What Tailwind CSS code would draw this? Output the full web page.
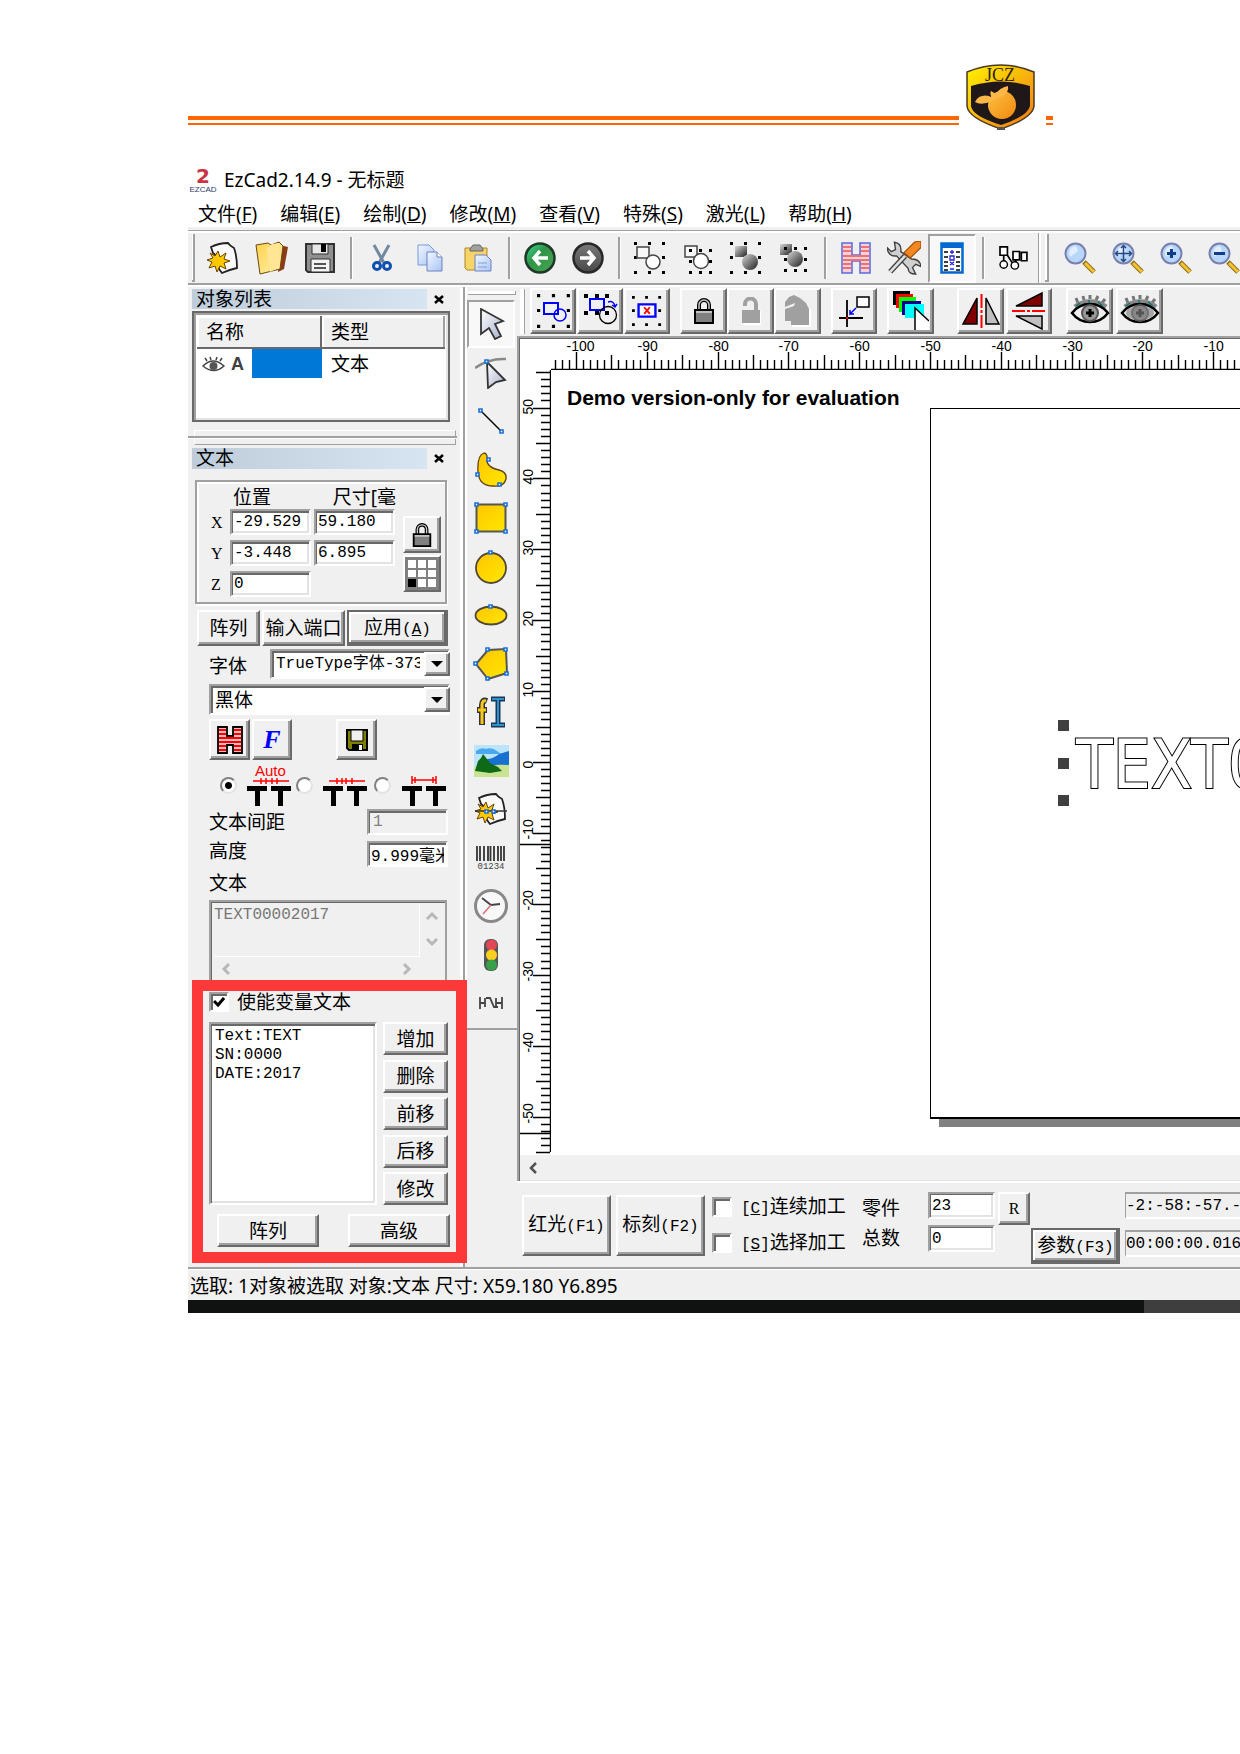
<!DOCTYPE html>
<html lang="zh-CN">
<head>
<meta charset="utf-8">
<title>EzCad2.14.9</title>
<script src="https://cdn.jsdelivr.net/npm/@tailwindcss/browser@4"></script>
</head>
<body class="bg-white text-black overflow-x-hidden min-h-screen font-['Noto_Sans','Noto_Sans_CJK_SC',sans-serif]">

<!-- shared icon shapes -->
<svg class="absolute w-0 h-0" aria-hidden="true">
  <defs>
    <linearGradient id="gy" x1="0" y1="0" x2="1" y2="1"><stop offset="0" stop-color="#ffc400"/><stop offset="1" stop-color="#ffe800"/></linearGradient>
    <linearGradient id="gshield" x1="0" y1="0" x2="1" y2="1"><stop offset="0" stop-color="#fff200"/><stop offset="1" stop-color="#f07818"/></linearGradient>
    <linearGradient id="gfruit" x1="0" y1="0" x2="1" y2="1"><stop offset="0" stop-color="#ffc040"/><stop offset="1" stop-color="#f08a10"/></linearGradient>
    <linearGradient id="ggray" x1="0" y1="0" x2="1" y2="1"><stop offset="0" stop-color="#d8d8d8"/><stop offset="1" stop-color="#202020"/></linearGradient>
    <linearGradient id="gfold" x1="0" y1="0" x2="1" y2="1"><stop offset="0" stop-color="#ffd24a"/><stop offset="1" stop-color="#fff0b0"/></linearGradient>
    <linearGradient id="gdoc" x1="0" y1="0" x2="1" y2="1"><stop offset="0" stop-color="#f2f7ff"/><stop offset="1" stop-color="#a8c4f4"/></linearGradient>
    <linearGradient id="gcur" x1="0" y1="0" x2="1" y2="1"><stop offset="0" stop-color="#ffffff"/><stop offset="1" stop-color="#a8b0cc"/></linearGradient>
    <linearGradient id="ggreen" x1="0" y1="0" x2="1" y2="1"><stop offset="0" stop-color="#38e89c"/><stop offset=".4" stop-color="#2f9448"/><stop offset="1" stop-color="#48a850"/></linearGradient>
    <linearGradient id="gdark" x1="0" y1="0" x2="0" y2="1"><stop offset="0" stop-color="#7a7a7a"/><stop offset="1" stop-color="#484848"/></linearGradient>
    <symbol id="dots9" viewBox="0 0 32 32"><path d="M0 0h3v3H0zM14 0h3v3h-3zM28 0h3v3h-3zM0 14h3v3H0zM28 14h3v3h-3zM0 29h3v3H0zM14 29h3v3h-3zM28 29h3v3h-3z"/></symbol>
    <symbol id="star" viewBox="0 0 32 32"><path d="M4 5q8-4 17-4 2 3 6 5 3 8 3 20-9 2-15 5l-3-4-1-12-5-4z" fill="#fafafa" stroke="#222" stroke-width="1.800"/><path d="M11 9l2 6 6-4-2 6 6 2-6 2 2 6-6-3-3 6-2-6-6 2 3-6-5-2 6-2-3-5 5 3z" fill="#ffc800" stroke="#6b4400"/></symbol>
    <symbol id="lens" viewBox="0 0 32 32"><path d="M20 20l10 10" stroke="#8c6a1c" stroke-width="5"/><path d="M21 21l9 9" stroke="#f4c430" stroke-width="3"/><circle cx="11.500" cy="11.500" r="10" fill="#b8d6fa" stroke="#7a80ac" stroke-width="2"/><path d="M5 11a7 7 0 0 1 7-7l2 5-8 6z" fill="#e0eeff"/></symbol>
    <symbol id="eye" viewBox="0 0 40 32"><path d="M8 8L6 3M14 5l-1-4M20 4V0M26 5l2-4M32 8l3-4" stroke="#777" stroke-width="3"/><path d="M5 12C14 5 27 5 36 12" stroke="#888" stroke-width="5" fill="none"/><path d="M2 18c9-12 27-12 36 0-9 12-27 12-36 0z" fill="#eee" stroke="#000" stroke-width="2.500"/><path d="M6 11l4-3M28 7l5 4M19 5v3" stroke="#087878" stroke-width="1.500"/><circle cx="20" cy="18" r="8" fill="#999" stroke="#555" stroke-width="2"/><path d="M20 14v8M16 18h8" stroke="#000" stroke-width="3"/></symbol>
    <symbol id="padlock" viewBox="0 0 20 26"><path d="M5 12V7a5 5 0 0 1 10 0v5" fill="none" stroke="#000" stroke-width="4"/><path d="M5 12V7a5 5 0 0 1 10 0v5" fill="none" stroke="#c8c8c8" stroke-width="1.500"/><path d="M1 12h18v13H1z" fill="#808080" stroke="#000" stroke-width="2"/><path d="M2 14h16" stroke="#c0c0c0" stroke-width="2"/></symbol>
    <symbol id="tt" viewBox="0 0 44 30"><path d="M0 10h20v5h-7v15H8V15H0zM24 10h20v5h-8v15h-5V15h-7z"/></symbol>
    <symbol id="pt" viewBox="0 0 5 5"><path d="M1 1h3v3H1z" fill="#fff" stroke="#1a6fd8" stroke-width="1.600"/></symbol>
  </defs>
</svg>

<header class="flex items-start pl-[188px] pt-16 h-[158px]">
  <div class="w-[771px] mt-[52px] h-[9px] border-t-4 border-b-2 border-[#ff6600]"></div>
  <svg class="w-[87px] h-[66px] overflow-visible" viewBox="0 0 87 66" role="img" aria-label="JCZ">
    <path d="M8 8Q42-6 75 8V42Q74 54 42 65Q9 54 8 42z" fill="url(#gshield)" stroke="#4a3820" stroke-width="1.500"/>
    <path d="M12 22Q42 13 71 22V42Q69 52 42 61Q13 52 12 42z" fill="#201818"/>
    <path d="M38 63h8v3h-8z" fill="#555"/>
    <text x="41" y="17" text-anchor="middle" font-family="Liberation Serif" font-size="18" fill="#302000">JCZ</text>
    <circle cx="43" cy="41" r="14" fill="url(#gfruit)"/>
    <path d="M33 37Q22 42 16 38Q20 30 30 32L34 35Q30 30 32 27L37 30Q40 24 49 22Q50 28 44 32z" fill="#ffb848"/>
  </svg>
  <div class="w-[7px] mt-[52px] h-[9px] border-t-4 border-b-2 border-[#ff6600]"></div>
</header>

<main class="ml-[188px] overflow-hidden">
  <!-- title -->
  <div class="flex items-center h-11 pl-[2px] gap-2">
    <svg class="w-[26px] h-7 overflow-visible" viewBox="0 0 26 28"><text x="13" y="17" text-anchor="middle" font-family="DejaVu Sans" font-weight="bold" font-size="20" fill="#cc3344">2</text><text x="13" y="26" text-anchor="middle" font-family="Liberation Sans" font-size="8" fill="#303a6a">EZCAD</text></svg>
    <h1 class="text-[19px] leading-6">EzCad2.14.9 - 无标题</h1>
  </div>
  <!-- menu -->
  <nav class="flex items-center h-[25px] pl-[10px] pb-[2px] text-[19px] leading-6 gap-[23px] whitespace-nowrap">
    <a href="#">文件(<u>F</u>)</a><a href="#">编辑(<u>E</u>)</a><a href="#">绘制(<u>D</u>)</a><a href="#">修改(<u>M</u>)</a><a href="#">查看(<u>V</u>)</a><a href="#">特殊(<u>S</u>)</a><a href="#">激光(<u>L</u>)</a><a href="#">帮助(<u>H</u>)</a>
  </nav>
  <!-- main toolbar -->
  <div class="bg-[#f0f0f0] pt-[3px]">
    <div class="border-t border-[#a0a0a0]"><div class="border-t-2 border-white"></div></div>
    <div class="flex h-[52px] items-center border-b-2 border-[#a0a0a0]">
      <div class="w-[3px] ml-1 mr-1 h-12 border-r-2 border-b-2 border-[#a0a0a0] bg-white shrink-0"></div>
      <button class="w-12 h-12 grid place-items-center shrink-0" aria-label="新建"><svg class="w-8 h-8"><use href="#star"/></svg></button>
      <button class="w-[49px] h-12 grid place-items-center shrink-0" aria-label="打开"><svg class="w-9 h-9" viewBox="0 0 36 36"><path d="M26 5l8 2-4 22-6 3z" fill="#8a3c18"/><path d="M2 5l12-2 3 2 8-3 4 4-3 23-20 5z" fill="url(#gfold)" stroke="#6a4a10"/><path d="M13 8l5-4 8-1-2 25-8 4z" fill="#ffe594"/></svg></button>
      <button class="w-12 h-12 grid place-items-center shrink-0" aria-label="保存"><svg class="w-8 h-8" viewBox="0 0 32 32"><path d="M2 2h28v28H4l-2-2z" fill="#909090" stroke="#303030" stroke-width="2"/><path d="M8 2h16v10H8z" fill="#e8e8e8" stroke="#303030"/><path d="M17 2h5v8h-5z"/><path d="M7 17h19v13H7z" fill="#f4f4f4" stroke="#303030"/><path d="M10 22h12M10 26h12" stroke="#555" stroke-width="2"/></svg></button>
      <div class="w-[14px] h-[42px] grid place-items-center shrink-0"><div class="w-[3px] h-full border-l-2 border-[#a0a0a0] bg-white"></div></div>
      <button class="w-12 h-12 grid place-items-center shrink-0" aria-label="剪切"><svg class="w-6 h-7" viewBox="0 0 24 28"><path d="M4 1l10 18M19 1L9 19" stroke="#7088a0" stroke-width="3"/><circle cx="7" cy="22" r="3.500" fill="none" stroke="#0d50b0" stroke-width="3"/><circle cx="17" cy="22" r="3.500" fill="none" stroke="#0d50b0" stroke-width="3"/></svg></button>
      <button class="w-12 h-12 grid place-items-center shrink-0" aria-label="复制"><svg class="w-7 h-7" viewBox="0 0 28 28"><path d="M2 1h11l5 5v15H2z" fill="url(#gdoc)" stroke="#7898dc"/><path d="M11 8h10l5 5v14H11z" fill="url(#gdoc)" stroke="#7080c4"/><path d="M21 8v5h5" fill="#fff" stroke="#7080c4"/></svg></button>
      <button class="w-12 h-12 grid place-items-center shrink-0" aria-label="粘贴"><svg class="w-7 h-7" viewBox="0 0 28 28"><path d="M1 4h22v22H3l-2-2z" fill="#f6d468" stroke="#b08820"/><path d="M6 5l3-4h7l3 4v2H6z" fill="#a0a0a0" stroke="#666"/><path d="M11 11h11l5 5v11H11z" fill="url(#gdoc)" stroke="#7080c4"/><path d="M14 19h9M14 23h9" stroke="#80a0d8"/></svg></button>
      <div class="w-[14px] h-[42px] grid place-items-center shrink-0"><div class="w-[3px] h-full border-l-2 border-[#a0a0a0] bg-white"></div></div>
      <button class="w-12 h-12 grid place-items-center shrink-0" aria-label="撤销"><svg class="w-8 h-8" viewBox="0 0 32 32"><circle cx="16" cy="16" r="14.500" fill="url(#ggreen)" stroke="#203828" stroke-width="2.500"/><path d="M16 9l-6 7 6 7M10 16h14" fill="none" stroke="#fff" stroke-width="3.500"/></svg></button>
      <button class="w-12 h-12 grid place-items-center shrink-0" aria-label="重做"><svg class="w-8 h-8" viewBox="0 0 32 32"><circle cx="16" cy="16" r="14.500" fill="url(#gdark)" stroke="#282828" stroke-width="2.500"/><path d="M16 9l6 7-6 7M22 16H8" fill="none" stroke="#fff" stroke-width="3.500"/></svg></button>
      <div class="w-[14px] h-[42px] grid place-items-center shrink-0"><div class="w-[3px] h-full border-l-2 border-[#a0a0a0] bg-white"></div></div>
      <button class="w-12 h-12 grid place-items-center shrink-0" aria-label="组合"><svg class="w-8 h-8" viewBox="0 0 32 32"><use href="#dots9"/><path d="M3 5h12v11H3z" fill="#f8f8f8" stroke="#444" stroke-width="1.500"/><circle cx="19" cy="20" r="7" fill="#fff" stroke="#444" stroke-width="1.500"/></svg></button>
      <button class="w-12 h-12 grid place-items-center shrink-0" aria-label="分离组合"><svg class="w-8 h-8" viewBox="0 0 32 32"><path d="M3 4h12v11H3z" fill="#f8f8f8" stroke="#444" stroke-width="1.500"/><circle cx="19" cy="19" r="7.500" fill="#fff" stroke="#444" stroke-width="1.500"/><path d="M7 7h3v3H7zM17 7h3v3h-3zM27 7h3v3h-3zM7 18h3v3H7zM27 18h3v3h-3zM7 29h3v3H7zM17 29h3v3h-3zM27 29h3v3h-3z"/></svg></button>
      <button class="w-12 h-12 grid place-items-center shrink-0" aria-label="群组"><svg class="w-8 h-8" viewBox="0 0 32 32"><use href="#dots9"/><path d="M5 4h12v11H5z" fill="url(#ggray)"/><circle cx="20" cy="20" r="8" fill="url(#ggray)"/></svg></button>
      <button class="w-12 h-12 grid place-items-center shrink-0" aria-label="分离群组"><svg class="w-8 h-8" viewBox="0 0 32 32"><path d="M2 2h12v11H2z" fill="url(#ggray)"/><circle cx="17" cy="17" r="8" fill="url(#ggray)"/><path d="M6 5h3v3H6zM16 5h3v3h-3zM26 5h3v3h-3zM6 16h3v3H6zM26 16h3v3h-3zM6 27h3v3H6zM16 27h3v3h-3zM26 27h3v3h-3z"/></svg></button>
      <div class="w-[14px] h-[42px] grid place-items-center shrink-0"><div class="w-[3px] h-full border-l-2 border-[#a0a0a0] bg-white"></div></div>
      <button class="w-12 h-12 grid place-items-center shrink-0" aria-label="填充"><svg class="w-8 h-8" viewBox="0 0 32 32"><path d="M2 1h10v12h8V1h10v30H20V19h-8v12H2z" fill="#f8d0d8" stroke="#5868e0" stroke-width="1.500"/><path d="M3 5h8M3 9h8M21 5h8M21 9h8M3 14h26M3 18h26M3 22h8M3 26h8M21 22h8M21 26h8" stroke="#f07070" stroke-width="2"/></svg></button>
      <button class="w-12 h-12 grid place-items-center shrink-0" aria-label="系统参数"><svg class="w-[34px] h-[34px]" viewBox="0 0 32 32"><path d="M7 1l1 7-4 2-4-4q1 9 9 8l11 12q0 5 7 5l-3-6 3-3 5 2q-1-7-9-7L13 10Q14 2 7 1z" fill="#d0d0d0" stroke="#404040" stroke-width="1.300"/><path d="M3 29L17 14" stroke="#404040" stroke-width="5"/><path d="M3 29L17 14" stroke="#e0e0e0" stroke-width="2.500"/><path d="M16 11l10-10 6-1v6l-10 10z" fill="#f48820" stroke="#a04800"/></svg></button>
      <button class="w-12 h-[49px] grid place-items-center shrink-0 border-2 border-t-[#a0a0a0] border-l-[#a0a0a0] border-r-white border-b-white bg-[#f8f8f8]" aria-label="对象列表"><svg class="w-6 h-8" viewBox="0 0 24 32"><path d="M1.500 1.500h21v29h-21z" fill="#fff" stroke="#0068d0" stroke-width="2.500"/><path d="M1 1h22v5H1z" fill="#0068d0"/><path d="M4 10h4M16 10h4M4 15h4M16 15h4M4 20h4M16 20h4M4 24h4M16 24h4M4 28h4M16 28h4" stroke="#000" stroke-width="1.300"/><path d="M12 8v4M10 10h4M10 14h4v4h-4zM10 20l4 3M14 20l-4 3M10 27h4" fill="none" stroke="#2020e0" stroke-width="1.300"/></svg></button>
      <div class="w-[14px] h-[42px] grid place-items-center shrink-0"><div class="w-[3px] h-full border-l-2 border-[#a0a0a0] bg-white"></div></div>
      <button class="w-[46px] h-12 grid place-items-center shrink-0" aria-label="节点"><svg class="w-[30px] h-[26px]" viewBox="0 0 32 28"><path d="M2 2h8v9H2zM16 7h7v9h-7zM25 8h6v9h-6zM6 11v7M10 11l5 8M19 16v3" fill="#fff" stroke="#000" stroke-width="1.800"/><circle cx="6" cy="21" r="4" fill="#fff" stroke="#000" stroke-width="1.500"/><circle cx="18" cy="22" r="4" fill="#fff" stroke="#000" stroke-width="1.500"/></svg></button>
      <div class="w-[3px] ml-[2px] h-full border-l border-[#a0a0a0] bg-white shrink-0"></div>
      <div class="w-[4px] ml-1 mr-[7px] h-12 border-r-2 border-b-2 border-[#a0a0a0] bg-white shrink-0"></div>
      <button class="w-12 h-12 grid place-items-center shrink-0" aria-label="缩放"><svg class="w-8 h-8"><use href="#lens"/></svg></button>
      <button class="w-12 h-12 grid place-items-center shrink-0" aria-label="全部"><svg class="w-8 h-8" viewBox="0 0 32 32"><use href="#lens"/><path d="M11.500 4v15M4 11.500h15M9 6l2.500-2.500L14 6M9 17l2.500 2.500L14 17M6 9l-2.500 2.500L6 14M17 9l2.500 2.500L17 14" stroke="#284880" stroke-width="1.500" fill="none"/></svg></button>
      <button class="w-12 h-12 grid place-items-center shrink-0" aria-label="放大"><svg class="w-8 h-8" viewBox="0 0 32 32"><use href="#lens"/><path d="M11.500 7v9M7 11.500h9" stroke="#103c88" stroke-width="3"/></svg></button>
      <button class="w-12 h-12 grid place-items-center shrink-0" aria-label="缩小"><svg class="w-8 h-8" viewBox="0 0 32 32"><use href="#lens"/><path d="M6 11.500h11" stroke="#103c88" stroke-width="3"/></svg></button>
    </div>
  </div>

  <div class="flex bg-[#f0f0f0] border-t-2 border-white border-b-2 border-b-[#a0a0a0]">
    <!-- left dock -->
    <aside class="relative w-[275px] h-[980px] shrink-0 pl-1 text-[19px] leading-5">
      <div class="flex items-center gap-[2px] mt-[2px]">
        <h2 class="w-[235px] h-5 pl-1 bg-linear-to-r from-[#bfcddb] to-[#d7e4f2]">对象列表</h2>
        <button class="w-5 h-5 grid place-items-center" aria-label="关闭"><svg class="w-[10px] h-[9px]" viewBox="0 0 10 9"><path d="M1 1l8 7M9 1L1 8" stroke="#000" stroke-width="2.500"/></svg></button>
      </div>
      <div class="mt-[2px] w-[258px] h-[111px] bg-white border-2 border-[#696969] shadow-[inset_2px_2px_0_#a0a0a0,inset_-2px_-2px_0_#e3e3e3] p-[3px]">
        <table class="w-full table-fixed border-collapse text-left">
          <thead><tr class="h-8">
            <th class="w-[125px] font-normal pl-[9px] bg-[#f0f0f0] border-b-2 border-[#696969] shadow-[inset_-2px_0_0_#696969,inset_2px_2px_0_#fff]">名称</th>
            <th class="font-normal pl-[9px] bg-[#f0f0f0] border-b-2 border-[#696969] shadow-[inset_-2px_0_0_#a0a0a0,inset_2px_2px_0_#fff]">类型</th>
          </tr></thead>
          <tbody><tr class="h-[29px]">
            <td class="p-0"><div class="flex items-center h-[29px]"><svg class="w-[23px] h-4 ml-[5px] mr-[6px]" viewBox="0 0 23 16"><path d="M1 10q10-10 21 0-10 9-21 0zM5 5L3 2M9 4L8 1M14 4l1-3M18 5l2-3" fill="#fff" stroke="#444" stroke-width="1.500"/><circle cx="11.500" cy="10" r="4" fill="#555"/></svg><b class="w-[13px] text-[18px] text-[#404040] font-['Liberation_Sans']">A</b><span class="ml-2 flex-1 self-stretch bg-[#0078d7]"></span></div></td>
            <td class="p-0 pl-[9px]">文本</td>
          </tr></tbody>
        </table>
      </div>
      <div class="mt-2 ml-[2px] w-[262px] h-[15px] border border-t-white border-l-white border-r-[#a0a0a0] border-b-[#a0a0a0] pt-[5px]"><div class="-ml-2 w-[270px] h-[3px] border-t-2 border-[#a0a0a0] bg-white"></div></div>

      <div class="flex items-center gap-[2px] mt-[3px]">
        <h2 class="w-[235px] h-[21px] pl-1 bg-linear-to-r from-[#bfcddb] to-[#d7e4f2]">文本</h2>
        <button class="w-5 h-5 grid place-items-center" aria-label="关闭"><svg class="w-[10px] h-[9px]" viewBox="0 0 10 9"><path d="M1 1l8 7M9 1L1 8" stroke="#000" stroke-width="2.500"/></svg></button>
      </div>

      <div class="mt-[11px] ml-[3px] w-[252px] h-[124px] border-2 border-[#a0a0a0] shadow-[inset_2px_2px_0_#fff,1px_2px_0_#fff] flex">
        <div class="w-[199px]">
          <div class="flex h-[27px] pt-[5px] pl-9"><span class="w-[105px]">位置</span><span class="whitespace-nowrap">尺寸[毫</span></div>
          <div class="grid grid-cols-[16px_81px_81px] pl-[14px] gap-x-[3px] gap-y-[5px] font-['Liberation_Mono'] text-[16px] leading-5">
            <label for="px" class="pt-1 font-['Liberation_Serif']">X</label>
            <input id="px" value="-29.529" class="w-full h-[26px] px-[2px] bg-white border-2 border-t-[#a0a0a0] border-l-[#a0a0a0] border-r-white border-b-white shadow-[inset_1px_2px_0_#696969,inset_-2px_-2px_0_#e3e3e3]">
            <input aria-label="尺寸 X" value="59.180" class="w-full h-[26px] px-[2px] bg-white border-2 border-t-[#a0a0a0] border-l-[#a0a0a0] border-r-white border-b-white shadow-[inset_1px_2px_0_#696969,inset_-2px_-2px_0_#e3e3e3]">
            <label for="py" class="pt-1 font-['Liberation_Serif']">Y</label>
            <input id="py" value="-3.448" class="w-full h-[26px] px-[2px] bg-white border-2 border-t-[#a0a0a0] border-l-[#a0a0a0] border-r-white border-b-white shadow-[inset_1px_2px_0_#696969,inset_-2px_-2px_0_#e3e3e3]">
            <input aria-label="尺寸 Y" value="6.895" class="w-full h-[26px] px-[2px] bg-white border-2 border-t-[#a0a0a0] border-l-[#a0a0a0] border-r-white border-b-white shadow-[inset_1px_2px_0_#696969,inset_-2px_-2px_0_#e3e3e3]">
            <label for="pz" class="pt-1 font-['Liberation_Serif']">Z</label>
            <input id="pz" value="0" class="w-full h-[26px] px-[2px] bg-white border-2 border-t-[#a0a0a0] border-l-[#a0a0a0] border-r-white border-b-white shadow-[inset_1px_2px_0_#696969,inset_-2px_-2px_0_#e3e3e3]">
          </div>
        </div>
        <div class="pt-[34px] pl-[7px] flex flex-col gap-[2px]">
          <button aria-label="锁定" class="w-[38px] h-[37px] grid place-items-center border-2 border-t-white border-l-white border-r-[#696969] border-b-[#696969] shadow-[inset_-2px_-2px_0_#a0a0a0]"><svg class="w-5 h-6"><use href="#padlock"/></svg></button>
          <button aria-label="基准点" class="w-[38px] h-[37px] p-[3px] grid grid-cols-3 gap-[2px] bg-[#808080] border-2 border-t-white border-l-white border-r-[#696969] border-b-[#696969]"><i class="bg-white"></i><i class="bg-white"></i><i class="bg-white"></i><i class="bg-white"></i><i class="bg-white"></i><i class="bg-white"></i><i class="bg-black"></i><i class="bg-white"></i><i class="bg-white"></i></button>
        </div>
      </div>

      <div class="mt-[6px] ml-[5px] flex gap-[2px] h-9">
        <button class="w-[63px] border-2 border-t-white border-l-white border-r-[#696969] border-b-[#696969] shadow-[inset_-2px_-2px_0_#a0a0a0]">阵列</button>
        <button class="w-[83px] border-2 border-t-white border-l-white border-r-[#696969] border-b-[#696969] shadow-[inset_-2px_-2px_0_#a0a0a0] whitespace-nowrap">输入端口</button>
        <button class="w-[101px] border-2 border-[#696969] shadow-[inset_-2px_-2px_0_#696969,inset_2px_2px_0_#fff,inset_-4px_-4px_0_#a0a0a0]">应用<span class="font-['Liberation_Mono'] text-[16px]">(<u>A</u>)</span></button>
      </div>

      <div class="mt-[3px] ml-[17px] flex items-center justify-between w-[241px]">
        <label for="ftype" class="pt-1">字体</label>
        <div class="grid w-[180px]">
          <select id="ftype" class="col-start-1 row-start-1 appearance-none w-full h-[30px] pl-1 pr-7 bg-white text-[16px] leading-5 font-['Liberation_Mono','Noto_Sans_CJK_SC'] border-2 border-t-[#a0a0a0] border-l-[#a0a0a0] border-r-white border-b-white shadow-[inset_2px_2px_0_#696969]"><option>TrueType字体-373</option></select>
          <span class="col-start-1 row-start-1 justify-self-end mt-[3px] w-[26px] h-6 grid place-items-center bg-[#f0f0f0] border-2 border-t-white border-l-white border-r-[#696969] border-b-[#696969] shadow-[inset_-2px_-2px_0_#a0a0a0] pointer-events-none"><svg class="w-3 h-[6px]" viewBox="0 0 12 6"><path d="M0 0h12L6 6z"/></svg></span>
        </div>
      </div>
      <div class="grid mt-[5px] ml-[17px] w-[241px]">
        <select aria-label="字体名称" class="col-start-1 row-start-1 appearance-none w-full h-[31px] pl-1 pr-7 bg-white text-[19px] leading-6 border-2 border-t-[#a0a0a0] border-l-[#a0a0a0] border-r-white border-b-white shadow-[inset_2px_2px_0_#696969]"><option>黑体</option></select>
        <span class="col-start-1 row-start-1 justify-self-end mt-[3px] w-[26px] h-[25px] grid place-items-center bg-[#f0f0f0] border-2 border-t-white border-l-white border-r-[#696969] border-b-[#696969] shadow-[inset_-2px_-2px_0_#a0a0a0] pointer-events-none"><svg class="w-3 h-[6px]" viewBox="0 0 12 6"><path d="M0 0h12L6 6z"/></svg></span>
      </div>

      <div class="mt-1 ml-[17px] flex gap-[2px] h-[41px]">
        <button aria-label="填充" class="w-[41px] grid place-items-center border-2 border-t-white border-l-white border-r-[#696969] border-b-[#696969] shadow-[inset_-2px_-2px_0_#a0a0a0]"><svg class="w-[26px] h-7" viewBox="0 0 26 28"><path d="M1 1h9v9h6V1h9v26h-9v-8h-6v8H1z" fill="#fff" stroke="#000" stroke-width="1.800"/><path d="M2 4h7M2 8h7M17 4h7M17 8h7M2 12h22M2 16h22M2 20h7M2 24h7M17 20h7M17 24h7" stroke="#f00" stroke-width="2.500"/></svg></button>
        <button aria-label="字体样式" class="w-[40px] grid place-items-center border-2 border-t-white border-l-white border-r-[#696969] border-b-[#696969] shadow-[inset_-2px_-2px_0_#a0a0a0] font-['Liberation_Serif'] font-bold italic text-[26px] leading-7 text-[#00f]">F</button>
        <button aria-label="保存" class="ml-[42px] w-[41px] grid place-items-center border-2 border-t-white border-l-white border-r-[#696969] border-b-[#696969] shadow-[inset_-2px_-2px_0_#a0a0a0]"><svg class="w-[22px] h-[22px]" viewBox="0 0 22 22"><path d="M1 1h20v20H3l-2-2z" fill="#808000" stroke="#000" stroke-width="2"/><path d="M5 1h12v11H5z" fill="#f0f0f0" stroke="#000"/><path d="M6 15h11v6H6z"/><path d="M13 16h3v5h-3z" fill="#fff"/></svg></button>
      </div>

      <div class="mt-1 ml-[28px] flex items-center h-[42px]">
        <input type="radio" name="sp" checked aria-label="自动间距" class="appearance-none w-[17px] h-[17px] rounded-full bg-white border-2 border-t-[#808080] border-l-[#808080] border-r-[#e3e3e3] border-b-[#e3e3e3] checked:bg-[radial-gradient(circle,#000_3px,#fff_4px)]">
        <svg class="ml-[10px] w-[44px] h-[42px] overflow-visible" viewBox="0 0 44 42"><text x="8" y="12" font-family="Liberation Sans" font-size="15" fill="#f00">Auto</text><use href="#tt" y="12" width="44" height="30"/><path d="M6 17h36M14 14v6M19 14v6M25 14v6M30 14v6" stroke="#f00" stroke-width="1.500"/></svg>
        <input type="radio" name="sp" aria-label="间距二" class="ml-[5px] appearance-none w-[17px] h-[17px] rounded-full bg-white border-2 border-t-[#808080] border-l-[#808080] border-r-[#e3e3e3] border-b-[#e3e3e3]">
        <svg class="ml-[10px] w-[44px] h-[42px]" viewBox="0 0 44 42"><use href="#tt" y="12" width="44" height="30"/><path d="M6 17h36M14 14v6M19 14v6M23 14v6M29 14v6" stroke="#f00" stroke-width="1.500"/></svg>
        <input type="radio" name="sp" aria-label="间距三" class="ml-[7px] appearance-none w-[17px] h-[17px] rounded-full bg-white border-2 border-t-[#808080] border-l-[#808080] border-r-[#e3e3e3] border-b-[#e3e3e3]">
        <svg class="ml-[11px] w-[44px] h-[42px]" viewBox="0 0 44 42"><use href="#tt" y="12" width="44" height="30"/><path d="M10 16h24M10 12v8M34 12v8M13 13v6M31 13v6" stroke="#f00" stroke-width="1.500"/></svg>
      </div>

      <div class="mt-[3px] ml-[17px] w-[239px] flex justify-between items-center"><label for="gap">文本间距</label><input id="gap" value="1" disabled class="w-[81px] h-[26px] px-1 text-[16px] font-['Liberation_Mono'] text-[#808080] border-2 border-t-[#a0a0a0] border-l-[#a0a0a0] border-r-white border-b-white shadow-[inset_1px_2px_0_#696969]"></div>
      <div class="mt-[6px] ml-[17px] w-[239px] flex justify-between items-start"><label for="hgt">高度</label><input id="hgt" value="9.999毫米" class="w-[81px] h-[26px] px-[2px] text-[16px] font-['Liberation_Mono','Noto_Sans_CJK_SC'] bg-white border-2 border-t-[#a0a0a0] border-l-[#a0a0a0] border-r-white border-b-white shadow-[inset_1px_2px_0_#696969]"></div>
      <label for="txt" class="block mt-[6px] ml-[17px]">文本</label>
      <div class="mt-[7px] ml-[17px] w-[238px] h-[90px] border-2 border-t-[#a0a0a0] border-l-[#a0a0a0] border-r-[#a0a0a0] border-b-white shadow-[inset_1px_1px_0_#696969] pl-[3px] pt-[3px] grid grid-cols-[206px_1fr] grid-rows-[52px_1fr]">
        <textarea id="txt" disabled class="resize-none overflow-hidden border-r border-b border-white text-[16px] leading-5 font-['Liberation_Mono'] text-[#777]">TEXT00002017</textarea>
        <svg class="w-6 h-12" viewBox="0 0 24 48"><path d="M7 14l5-5 5 5M7 34l5 5 5-5" fill="none" stroke="#b8b8b8" stroke-width="3"/></svg>
        <svg class="w-[206px] h-6" viewBox="0 0 206 24"><path d="M15 7l-5 5 5 5M190 7l5 5-5 5" fill="none" stroke="#b8b8b8" stroke-width="3"/></svg>
      </div>

      <label class="mt-[2px] ml-[17px] flex items-center gap-2"><input type="checkbox" checked class="peer appearance-none w-5 h-5 bg-white border-2 border-t-[#a0a0a0] border-l-[#a0a0a0] border-r-white border-b-white shadow-[inset_2px_2px_0_#696969]"><svg class="hidden peer-checked:block w-3 h-3 -ml-6 mr-1" viewBox="0 0 12 12"><path d="M1 5l4 4 6-7" fill="none" stroke="#000" stroke-width="3"/></svg>使能变量文本</label>
      <div class="mt-[10px] ml-[17px] w-[239px] flex justify-between">
        <select size="3" aria-label="变量文本" class="appearance-none [scrollbar-width:none] w-[168px] h-[183px] pl-[2px] pt-[3px] bg-white text-[16px] leading-[19px] font-['Liberation_Mono'] border-2 border-t-[#a0a0a0] border-l-[#a0a0a0] border-r-white border-b-white shadow-[inset_1px_2px_0_#696969,inset_-2px_-2px_0_#e3e3e3]"><option class="p-0 pl-[2px] h-[19px] min-h-0">Text:TEXT</option><option class="p-0 pl-[2px] h-[19px] min-h-0">SN:0000</option><option class="p-0 pl-[2px] h-[19px] min-h-0">DATE:2017</option></select>
        <div class="w-[65px] flex flex-col justify-between">
          <button class="h-[33px] border-2 border-t-white border-l-white border-r-[#696969] border-b-[#696969] shadow-[inset_-2px_-2px_0_#a0a0a0]">增加</button>
          <button class="h-[33px] border-2 border-t-white border-l-white border-r-[#696969] border-b-[#696969] shadow-[inset_-2px_-2px_0_#a0a0a0]">删除</button>
          <button class="h-[33px] border-2 border-t-white border-l-white border-r-[#696969] border-b-[#696969] shadow-[inset_-2px_-2px_0_#a0a0a0]">前移</button>
          <button class="h-[33px] border-2 border-t-white border-l-white border-r-[#696969] border-b-[#696969] shadow-[inset_-2px_-2px_0_#a0a0a0]">后移</button>
          <button class="h-[33px] border-2 border-t-white border-l-white border-r-[#696969] border-b-[#696969] shadow-[inset_-2px_-2px_0_#a0a0a0]">修改</button>
        </div>
      </div>
      <div class="mt-[9px] ml-[25px] w-[233px] flex justify-between">
        <button class="w-[102px] h-[33px] border-2 border-t-white border-l-white border-r-[#696969] border-b-[#696969] shadow-[inset_-2px_-2px_0_#a0a0a0]">阵列</button>
        <button class="w-[102px] h-[33px] border-2 border-t-white border-l-white border-r-[#696969] border-b-[#696969] shadow-[inset_-2px_-2px_0_#a0a0a0]">高级</button>
      </div>
      <!-- highlight frame over the variable text group -->
      <div class="absolute z-10 left-1 bottom-1 w-[275px] h-[283px] border-[11px] border-[#fc3838] pointer-events-none"></div>
    </aside>

    <!-- drawing tools -->
    <div class="w-[54px] shrink-0 border-l-2 border-[#a0a0a0] shadow-[-4px_0_0_-1px_#fff]">
      <div class="border-l-2 border-white h-[743px] border-b-2 border-b-[#a0a0a0] pt-1">
        <div class="h-1 w-12 ml-px border-b border-r border-[#a0a0a0] bg-white mb-[5px]"></div>
        <div class="flex flex-col justify-between h-[727px] w-[48px]">
          <button aria-label="选取" class="h-12 grid place-items-center border-2 border-t-[#a0a0a0] border-l-[#a0a0a0] border-r-white border-b-white bg-[#f8f8f8]"><svg class="w-8 h-8" viewBox="0 0 32 32"><path d="M6 1l22 12-8 3 6 12-6 3-6-11-8 6z" fill="url(#gcur)" stroke="#333" stroke-width="1.800"/></svg></button>
          <button aria-label="节点编辑" class="h-12 grid place-items-center"><svg class="w-8 h-8" viewBox="0 0 32 32"><path d="M0 11Q14 1 31 2" fill="none" stroke="#888" stroke-width="2.500"/><path d="M12 5l18 18-9 2-8 6z" fill="url(#gcur)" stroke="#333" stroke-width="1.800"/><use href="#pt" x="9" y="2" width="5" height="5"/></svg></button>
          <button aria-label="直线" class="h-12 grid place-items-center"><svg class="w-8 h-8" viewBox="0 0 32 32"><path d="M6 6l20 20" stroke="#000" stroke-width="1.500"/><use href="#pt" x="3" y="3" width="5" height="5"/><use href="#pt" x="24" y="24" width="5" height="5"/></svg></button>
          <button aria-label="曲线" class="h-12 grid place-items-center"><svg class="w-8 h-9" viewBox="0 0 32 36"><path d="M9 1Q2 3 3 20 4 34 18 34 29 35 31 27 32 20 24 18 14 16 12 10 13 1 9 1z" fill="url(#gy)" stroke="#604010" stroke-width="1.300"/><use href="#pt" x="11" y="5" width="5" height="5"/><use href="#pt" x="0" y="20" width="5" height="5"/><use href="#pt" x="22" y="30" width="5" height="5"/></svg></button>
          <button aria-label="矩形" class="h-12 grid place-items-center"><svg class="w-[34px] h-8" viewBox="0 0 34 32"><path d="M2.500 2.500h29v27h-29z" fill="url(#gy)" stroke="#555" stroke-width="2"/><use href="#pt" width="5" height="5"/><use href="#pt" x="29" width="5" height="5"/><use href="#pt" y="27" width="5" height="5"/><use href="#pt" x="29" y="27" width="5" height="5"/></svg></button>
          <button aria-label="圆" class="h-12 grid place-items-center"><svg class="w-[34px] h-[34px]" viewBox="0 0 34 34"><circle cx="17" cy="18" r="15" fill="url(#gy)" stroke="#504838" stroke-width="1.800"/><use href="#pt" x="14" width="5" height="5"/></svg></button>
          <button aria-label="椭圆" class="h-12 grid place-items-center"><svg class="w-[34px] h-[22px]" viewBox="0 0 34 22"><ellipse cx="17" cy="11.500" rx="15.500" ry="9" fill="url(#gy)" stroke="#504838" stroke-width="1.800"/><use href="#pt" x="14" width="5" height="5"/></svg></button>
          <button aria-label="多边形" class="h-12 grid place-items-center"><svg class="w-[36px] h-[34px]" viewBox="0 0 36 34"><path d="M3 17l12-14 18-1 1 24-19 6z" fill="url(#gy)" stroke="#555" stroke-width="2"/><use href="#pt" y="14" width="5" height="5"/><use href="#pt" x="12" width="5" height="5"/><use href="#pt" x="30" width="5" height="5"/><use href="#pt" x="31" y="24" width="5" height="5"/><use href="#pt" x="12" y="29" width="5" height="5"/></svg></button>
          <button aria-label="文字" class="h-12 grid place-items-center"><svg class="w-8 h-8" viewBox="0 0 32 32"><path d="M12 5Q7 3 7 9v20M2 14h10" fill="none" stroke="#333" stroke-width="6"/><path d="M11 5Q7 4 7 9v19M3 14h8" fill="none" stroke="#f8c820" stroke-width="3"/><path d="M16 3h14M23 3v26M16 29h14" stroke="#183858" stroke-width="5"/><path d="M17 3h12M23 3v26M17 29h12" stroke="#3090c8" stroke-width="2"/></svg></button>
          <button aria-label="位图" class="h-12 grid place-items-center"><svg class="w-[35px] h-8" viewBox="0 0 35 32"><path d="M0 0h35v32H0z" fill="#bce4fa"/><path d="M2 6q5-4 10-2 6-2 11 2l4 3H2z" fill="#48a8f0"/><path d="M13 14q6 0 12-5l10-3v15H15z" fill="#1870d0"/><path d="M0 22q20-3 35-2v12H0z" fill="#c8e490"/><path d="M1 26l3-10 3-3 2-4 4 5 3 4 8 4 4 4-12 2z" fill="#0f6a18"/></svg></button>
          <button aria-label="矢量文件" class="h-12 grid place-items-center"><svg class="w-8 h-8" viewBox="0 0 32 32"><use href="#star"/><path d="M0 18h32" stroke="#333" stroke-width="1.500"/><use href="#pt" x="9" y="16" width="5" height="5"/><use href="#pt" x="16" y="16" width="5" height="5"/></svg></button>
          <button aria-label="条码" class="h-12 grid place-items-center"><svg class="w-[30px] h-6 overflow-visible" viewBox="0 0 30 24"><path d="M1 0v15M4 0v15M8 0v15M12 0v15M14.500 0v15M18 0v15M22 0v15M25 0v15M28 0v15" stroke="#333" stroke-width="1.800"/><text x="15" y="23" text-anchor="middle" font-family="Liberation Mono" font-size="9" fill="#444">01234</text></svg></button>
          <button aria-label="延时" class="h-12 grid place-items-center"><svg class="w-9 h-9" viewBox="0 0 36 36"><circle cx="18" cy="18" r="15.500" fill="#f8f8f8" stroke="#888" stroke-width="3"/><path d="M9 10l9 7 9-1" fill="none" stroke="#444" stroke-width="1.800"/><path d="M18 17l-8 9" stroke="#e07070" stroke-width="1.500"/></svg></button>
          <button aria-label="输入口" class="h-12 grid place-items-center"><svg class="w-[14px] h-8" viewBox="0 0 14 32"><rect width="14" height="32" rx="6" fill="#555"/><circle cx="7.500" cy="6" r="5.500" fill="#e04858"/><circle cx="7.500" cy="16" r="5.500" fill="#f8d020"/><circle cx="7.500" cy="26" r="5.500" fill="#38a048"/></svg></button>
          <button aria-label="编码器" class="h-12 grid place-items-center"><svg class="w-6 h-3" viewBox="0 0 24 12"><path d="M1 0v12M1 6h5M6 1v9M23 0v12M17 6h6M7 1h4l4 9h4M17 1v9" fill="none" stroke="#444" stroke-width="1.800"/></svg></button>
        </div>
      </div>
    </div>

    <!-- work area -->
    <section class="flex-1 min-w-0 flex flex-col">
      <div class="flex h-[49px] pl-[3px] pt-px">
        <div class="w-[5px] mr-[5px] my-px h-[45px] border-r border-[#a0a0a0] bg-white shrink-0"></div>
        <button aria-label="组" class="w-[46px] h-[46px] shrink-0 grid place-items-center border-2 border-t-white border-l-white border-r-[#696969] border-b-[#696969] shadow-[inset_-2px_-2px_0_#a0a0a0]"><svg class="w-9 h-9" viewBox="0 0 36 36"><use href="#dots9" x="2" width="34" height="36"/><path d="M9 10h14v11H9z" fill="none" stroke="#00f" stroke-width="2"/><circle cx="25" cy="22" r="6" fill="none" stroke="#00f" stroke-width="1.500"/></svg></button>
        <button aria-label="组二" class="ml-[1px] w-[46px] h-[46px] shrink-0 grid place-items-center border-2 border-t-white border-l-white border-r-[#696969] border-b-[#696969] shadow-[inset_-2px_-2px_0_#a0a0a0]"><svg class="w-9 h-9" viewBox="0 0 36 36"><path d="M2 1h4v4H2zM13 1h4v4h-4zM23 1h4v4h-4zM2 18h4v4H2zM13 18h4v4h-4zM23 18h4v4h-4z"/><path d="M8 6h14v11H8z" fill="#f0f0f0" stroke="#00f" stroke-width="2"/><circle cx="26" cy="22" r="8.500" fill="none" stroke="#000" stroke-width="1.300"/><path d="M26 9q6-2 7 5M30 12l3 2 2-3" fill="none" stroke="#00f" stroke-width="1.500"/></svg></button>
        <button aria-label="删除" class="ml-[1px] w-[46px] h-[46px] shrink-0 grid place-items-center border-2 border-t-white border-l-white border-r-[#696969] border-b-[#696969] shadow-[inset_-2px_-2px_0_#a0a0a0]"><svg class="w-[30px] h-[30px]" viewBox="0 0 32 32"><use href="#dots9" width="32" height="32"/><path d="M7 9h18v13H7z" fill="#fff" stroke="#00f" stroke-width="2.500"/><path d="M13 12l6 7M19 12l-6 7" stroke="#f00" stroke-width="2"/></svg></button>
        <button aria-label="锁定" class="ml-[10px] w-[47px] h-[46px] shrink-0 grid place-items-center border-2 border-t-white border-l-white border-r-[#696969] border-b-[#696969] shadow-[inset_-2px_-2px_0_#a0a0a0]"><svg class="w-5 h-[26px]"><use href="#padlock"/></svg></button>
        <button aria-label="解锁" class="w-[47px] h-[46px] shrink-0 grid place-items-center border-2 border-t-white border-l-white border-r-[#696969] border-b-[#696969] shadow-[inset_-2px_-2px_0_#a0a0a0]"><svg class="w-5 h-7" viewBox="0 0 20 28"><path d="M4 9V7a5 5 0 0 1 11 0v8" fill="none" stroke="#a0a0a0" stroke-width="4"/><path d="M1 13h18v13H1z" fill="#a0a0a0"/><path d="M2 27h18V14" fill="none" stroke="#fff" stroke-width="2"/></svg></button>
        <button aria-label="全部解锁" class="w-[47px] h-[46px] shrink-0 grid place-items-center border-2 border-t-white border-l-white border-r-[#696969] border-b-[#696969] shadow-[inset_-2px_-2px_0_#a0a0a0]"><svg class="w-7 h-8" viewBox="0 0 28 32"><path d="M1 12V7l4-5 5-2 6 3 6 5 3 6v16H7v-4H1V14l9-3 1-3z" fill="#a0a0a0"/><path d="M8 31h18V14" fill="none" stroke="#fff" stroke-width="2"/></svg></button>
        <button aria-label="原点" class="ml-[10px] w-[46px] h-[46px] shrink-0 grid place-items-center border-2 border-t-white border-l-white border-r-[#696969] border-b-[#696969] shadow-[inset_-2px_-2px_0_#a0a0a0]"><svg class="w-8 h-8" viewBox="0 0 32 32"><path d="M9 5v27M1 23h24" stroke="#000" stroke-width="1.800"/><path d="M19 2h12v10H19z" fill="#fff" stroke="#000" stroke-width="1.500"/><path d="M18 13l-6 6v-4M12 19h4" stroke="#00f" fill="none" stroke-width="1.500"/><path d="M8 22h2v2H8z" fill="#f00"/></svg></button>
        <button aria-label="颜色" class="ml-[10px] w-[47px] h-[46px] shrink-0 grid place-items-center border-2 border-t-white border-l-white border-r-[#696969] border-b-[#696969] shadow-[inset_-2px_-2px_0_#a0a0a0]"><svg class="w-9 h-10" viewBox="0 0 36 40"><path d="M0 0h17v14H0z"/><path d="M3 3h17v14H3z" fill="#f00"/><path d="M6 6h17v15H6z" fill="#0f0"/><path d="M9 10h19v14H9z" fill="#000090"/><path d="M12 13h19v14H12z" fill="#0ff"/><path d="M22 17l14 13v9h-8l-6-1z" fill="#fff"/><path d="M22 39V17l14 13" fill="none" stroke="#000" stroke-width="1.500"/></svg></button>
        <button aria-label="水平镜像" class="ml-[23px] w-[47px] h-[46px] shrink-0 grid place-items-center border-2 border-t-white border-l-white border-r-[#696969] border-b-[#696969] shadow-[inset_-2px_-2px_0_#a0a0a0]"><svg class="w-[40px] h-[34px]" viewBox="0 0 40 34"><path d="M16 4v26H2z" fill="#800000" stroke="#000" stroke-width="1.500"/><path d="M25 4v26h13z" fill="#c0c0c0" stroke="#000" stroke-width="1.500"/><path d="M20.500 0v34" stroke="#f00" stroke-width="2" stroke-dasharray="14 2 3 2"/></svg></button>
        <button aria-label="垂直镜像" class="ml-[2px] w-[46px] h-[46px] shrink-0 grid place-items-center border-2 border-t-white border-l-white border-r-[#696969] border-b-[#696969] shadow-[inset_-2px_-2px_0_#a0a0a0]"><svg class="w-[34px] h-[40px]" viewBox="0 0 34 40"><path d="M30 2v13H4z" fill="#800000" stroke="#000" stroke-width="1.500"/><path d="M30 25v13L4 25z" fill="#c0c0c0" stroke="#000" stroke-width="1.500"/><path d="M0 20h34" stroke="#f00" stroke-width="2" stroke-dasharray="13 2 3 2"/></svg></button>
        <button aria-label="显示" class="ml-[14px] w-[47px] h-[46px] shrink-0 grid place-items-center border-2 border-t-white border-l-white border-r-[#696969] border-b-[#696969] shadow-[inset_-2px_-2px_0_#a0a0a0]"><svg class="w-10 h-8"><use href="#eye"/></svg></button>
        <button aria-label="隐藏" class="ml-[3px] w-[47px] h-[46px] shrink-0 grid place-items-center border-2 border-t-white border-l-white border-r-[#696969] border-b-[#696969] shadow-[inset_-2px_-2px_0_#a0a0a0]"><svg class="w-10 h-8" viewBox="0 0 40 32"><use href="#eye"/><ellipse cx="20" cy="18" rx="14" ry="7" fill="#808080" opacity=".65"/></svg></button>
      </div>
      <div class="border-t-2 border-l-2 border-[#a0a0a0]"><div class="border-t border-l border-[#696969] bg-white">
        <svg id="rulerTop" class="block w-full h-[31px]"></svg>
        <div class="flex h-[785px]">
          <svg id="rulerLeft" class="block w-[31px] h-full shrink-0"></svg>
          <div class="relative flex-1 min-w-0 overflow-hidden">
            <p class="absolute left-4 top-4 text-[21px] leading-6 font-bold whitespace-nowrap font-['Liberation_Sans']">Demo version-only for evaluation</p>
            <div class="absolute left-[379px] top-[38px] w-[710px] h-[711px] bg-white border border-b-2 border-black shadow-[9px_8px_0_#808080]"></div>
            <i class="absolute left-[507px] top-[350px] w-[11px] h-[11px] bg-[#404040]"></i>
            <i class="absolute left-[507px] top-[388px] w-[11px] h-[11px] bg-[#404040]"></i>
            <i class="absolute left-[507px] top-[425px] w-[11px] h-[11px] bg-[#404040]"></i>
            <p class="absolute left-[525px] top-[356px] text-[67px] leading-[78px] whitespace-nowrap text-white [-webkit-text-stroke:2px_#000] [paint-order:stroke_fill] font-['Liberation_Sans_Narrow','DejaVu_Sans_Condensed']">TEXT00002017</p>
          </div>
        </div>
        <div class="h-[26px] bg-[#f0f0f0] border-b border-[#e3e3e3] pl-2 flex items-center"><button aria-label="向左滚动"><svg class="w-[10px] h-3" viewBox="0 0 10 12"><path d="M8 1L3 6l5 5" fill="none" stroke="#505050" stroke-width="2.500"/></svg></button></div>
      </div></div>
      <div class="border-t-2 border-white flex pl-[5px] pt-2 text-[19px] leading-5 whitespace-nowrap">
        <button class="mt-1 w-[89px] h-[61px] shrink-0 border-2 border-t-white border-l-white border-r-[#696969] border-b-[#696969] shadow-[inset_-2px_-2px_0_#a0a0a0]">红光<span class="font-['Liberation_Mono'] text-[16px]">(F1)</span></button>
        <button class="mt-1 ml-[5px] w-[89px] h-[61px] shrink-0 border-2 border-t-white border-l-white border-r-[#696969] border-b-[#696969] shadow-[inset_-2px_-2px_0_#a0a0a0]">标刻<span class="font-['Liberation_Mono'] text-[16px]">(F2)</span></button>
        <div class="ml-[7px] mt-[6px] w-[150px] shrink-0 flex flex-col gap-4">
          <label class="flex items-center gap-[9px] h-5"><input type="checkbox" class="appearance-none shrink-0 w-5 h-5 bg-white border-2 border-t-[#a0a0a0] border-l-[#a0a0a0] border-r-white border-b-white shadow-[inset_2px_2px_0_#696969]"><span><span class="font-['Liberation_Mono'] text-[16px]">[<u>C</u>]</span>连续加工</span></label>
          <label class="flex items-center gap-[9px] h-5"><input type="checkbox" class="appearance-none shrink-0 w-5 h-5 bg-white border-2 border-t-[#a0a0a0] border-l-[#a0a0a0] border-r-white border-b-white shadow-[inset_2px_2px_0_#696969]"><span><span class="font-['Liberation_Mono'] text-[16px]">[<u>S</u>]</span>选择加工</span></label>
        </div>
        <div class="w-[66px] shrink-0 pt-[7px] flex flex-col gap-[10px]"><label for="parts">零件</label><label for="total">总数</label></div>
        <div class="w-[67px] shrink-0 flex flex-col gap-[6px] pt-px">
          <input id="parts" value="23" class="w-full h-[27px] px-[2px] text-[16px] font-['Liberation_Mono'] bg-white border-2 border-t-[#a0a0a0] border-l-[#a0a0a0] border-r-white border-b-white shadow-[inset_1px_1px_0_#696969,inset_-2px_-2px_0_#e3e3e3]">
          <input id="total" value="0" class="w-full h-[27px] px-[2px] text-[16px] font-['Liberation_Mono'] bg-white border-2 border-t-[#a0a0a0] border-l-[#a0a0a0] border-r-white border-b-white shadow-[inset_1px_1px_0_#696969,inset_-2px_-2px_0_#e3e3e3]">
        </div>
        <button class="ml-[3px] mt-px w-8 h-[33px] shrink-0 border-2 border-t-white border-l-white border-r-[#696969] border-b-[#696969] shadow-[inset_-2px_-2px_0_#a0a0a0] font-['Liberation_Serif'] text-[16px]">R</button>
        <button class="ml-px mt-[37px] w-[89px] h-9 shrink-0 border-2 border-[#696969] shadow-[inset_-2px_-2px_0_#696969,inset_2px_2px_0_#fff,inset_-4px_-4px_0_#a0a0a0]">参数<span class="font-['Liberation_Mono'] text-[16px]">(F3)</span></button>
        <div class="ml-[5px] pt-px min-w-0 flex-1 flex flex-col gap-[11px] text-[16px] leading-6 font-['Liberation_Mono']">
          <output class="block h-[27px] overflow-hidden border-t-2 border-l border-[#a0a0a0] border-b-2 border-b-white">-2:-58:-57.-9</output>
          <output class="block h-[27px] overflow-hidden border-t-2 border-l border-[#a0a0a0] border-b-2 border-b-white">00:00:00.016</output>
        </div>
      </div>
    </section>
  </div>
  <footer class="bg-[#f0f0f0] border-t border-white h-[31px] pl-[2px] pt-[2px] flex items-center text-[19px] leading-6 whitespace-nowrap">选取: 1对象被选取 对象:文本 尺寸: X59.180 Y6.895</footer>
  <div class="flex h-[13px] bg-[#101111]"><div class="ml-[956px] flex-1 bg-[#3e3e3e]"></div></div>
</main>

<script>
// Draws the two rulers; one unit is a millimetre.
const NS = 'http://www.w3.org/2000/svg';
function add(parent, name, attrs, text) {
  const el = document.createElementNS(NS, name);
  for (const k in attrs) el.setAttribute(k, attrs[k]);
  if (text !== undefined) el.textContent = text;
  parent.appendChild(el);
}
const font = { 'font-family': 'Liberation Sans', 'font-size': 14 };
const top_ = document.getElementById('rulerTop');
let d = 'M31 30.5H3000';
for (let v = -103; v <= 0; v++) {
  const x = Math.round(410 + (v + 50) * 7.08) + 0.5;
  const len = v % 10 === 0 ? 17 : v % 5 === 0 ? 14 : 9;
  d += `M${x} 30V${30 - len}`;
  if (v % 10 === 0) add(top_, 'text', { x: x - 10, y: 12, ...font }, v);
}
add(top_, 'path', { d, stroke: '#000', 'stroke-width': 1.4 });
const left = document.getElementById('rulerLeft');
d = 'M30.5 0V782';
for (let v = -55; v <= 55; v++) {
  const y = Math.round(392 - v * 7.09) + 0.5;
  const len = v % 10 === 0 ? 17 : v % 5 === 0 ? 14 : 9;
  d += `M30 ${y}H${30 - len}`;
  if (v % 10 === 0) add(left, 'text', { transform: `translate(13 ${y + 6}) rotate(-90)`, ...font }, v);
}
d += 'M0 474.5H31M0 763.5H31';
add(left, 'path', { d, stroke: '#000', 'stroke-width': 1.4 });
</script>
</body>
</html>
